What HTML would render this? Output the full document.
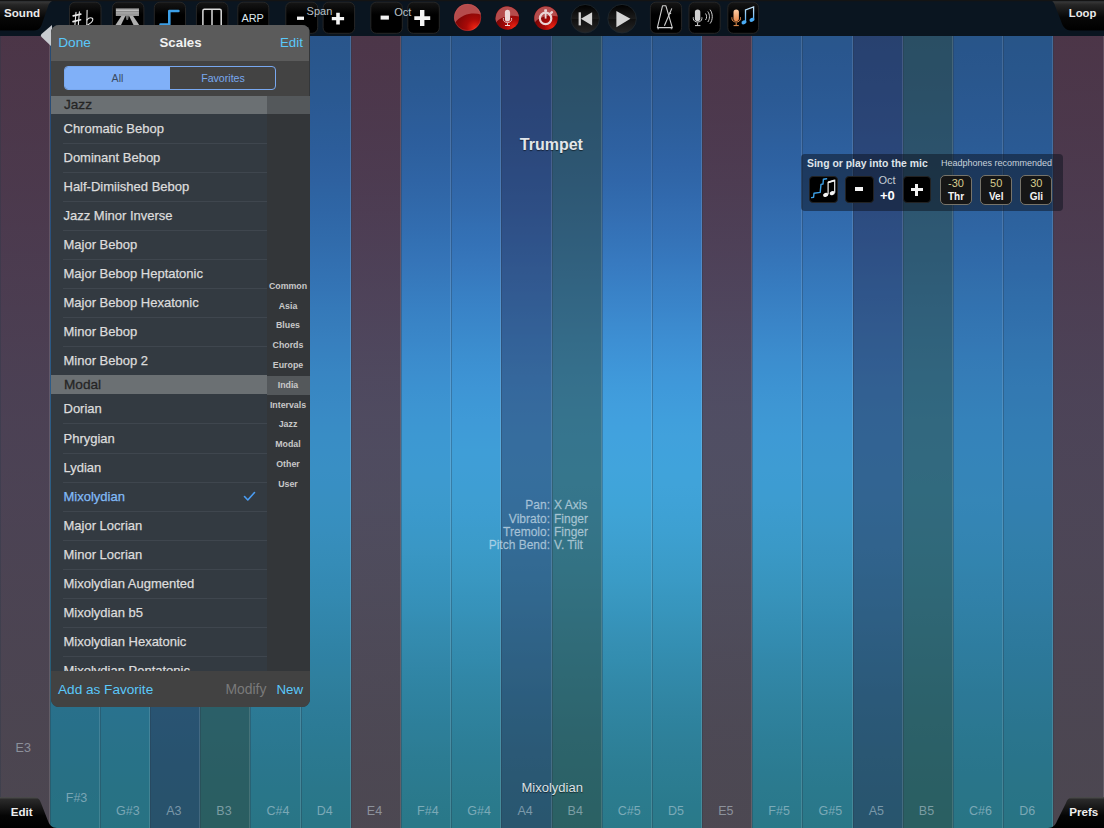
<!DOCTYPE html>
<html><head><meta charset="utf-8">
<style>
*{box-sizing:border-box;margin:0;padding:0}
html,body{width:1104px;height:828px;overflow:hidden;background:#0a141e;font-family:"Liberation Sans",sans-serif}
#stage{position:absolute;left:0;top:0;width:1104px;height:828px;overflow:hidden}
#bg{position:absolute;left:0;top:36px;width:1104px;height:792px;
 background:
  radial-gradient(ellipse 450px 300px at 612px 364px, rgba(72,170,232,1) 0%, rgba(70,168,226,.5) 45%, rgba(68,165,220,0) 100%),
  linear-gradient(to bottom,#25508c 0%,#2a5fa2 15%,#2e6cb2 33%,#3182ba 52%,#2f8aac 72%,#267282 100%);}
.col{position:absolute;top:36px;height:792px}
.col:after{content:"";position:absolute;inset:0;border-left:1px solid rgba(40,55,70,.32);box-shadow:inset -1px 0 0 rgba(255,255,255,.13)}
.A:before{content:'';position:absolute;inset:0;background:rgba(40,38,75,.42)}
.B:before{content:'';position:absolute;inset:0;background:rgba(43,72,62,.5)}
.E:before{content:'';position:absolute;inset:0;background:linear-gradient(rgba(86,45,54,.78),rgba(86,50,58,.74) 45%,rgba(85,60,68,.8))}
.lbl{position:absolute;font-size:12.5px;line-height:1;white-space:nowrap;color:rgba(205,220,228,.5)}
#toolbar{position:absolute;left:0;top:0;width:1104px;height:36px;background:#0b1520}
.btn{position:absolute;top:2px;width:31.5px;height:31.5px;border-radius:6px;background:#000;border:1px solid #1c232a}
.txt{position:absolute;white-space:nowrap;line-height:1}
#panel{position:absolute;left:51px;top:25px;width:258.6px;height:682px;border-radius:8px;overflow:hidden;background:#33373a}
#arrow{position:absolute;left:40px;top:25px;width:14px;height:22px}
#phead{position:absolute;left:0;top:0;width:258px;height:36px;background:#5b5b5b}
#pseg{position:absolute;left:0;top:36px;width:258px;height:35px;background:#434343}
#seg{position:absolute;left:13px;top:5px;width:212px;height:24px;border:1px solid #78a8f0;border-radius:4px;overflow:hidden;background:#434343}
#seg .on{position:absolute;left:0;top:0;width:105px;height:22px;background:#80b0f8;color:#3a4a60;font-size:10.6px;text-align:center;line-height:23px}
#seg .off{position:absolute;left:105px;top:0;width:106px;height:22px;color:#78a8f0;font-size:10.6px;text-align:center;line-height:23px}
#list{position:absolute;left:0;top:0;width:216px;height:646px;background:#333a41}
.sec{position:absolute;left:0;width:258px;height:19px;background:linear-gradient(to right,#6b7073 216px,#54585b 216px);color:#252525;-webkit-text-stroke:.3px #252525;font-size:13.6px;padding-left:13px;line-height:19px}
.row{position:absolute;left:0;width:216px;height:29px}
.row span{position:absolute;left:12.5px;top:7px;font-size:13px;color:#dcdcdc;line-height:15px;-webkit-text-stroke:.25px #dcdcdc;white-space:nowrap}
.row:after{content:"";position:absolute;left:12px;right:0;bottom:-1px;height:1px;background:#3f464e}
.row.sel span{color:#82bbf7;-webkit-text-stroke:.25px #82bbf7}
.chk{position:absolute;left:190px;top:9px;width:12px;height:10px}
#idxs{position:absolute;left:216px;top:0;width:43px;height:646px;background:#333639}
.idx{position:absolute;left:0;width:42px;text-align:center;font-size:8.8px;font-weight:700;color:#c8c8c8;line-height:11px}
#pfoot{position:absolute;left:0;top:646px;width:259px;height:36px;background:#424242}
.tab{position:absolute;background:linear-gradient(#2b2b2b,#050505 55%,#000);}
.box{position:absolute;top:21px;width:32px;height:29.5px;border-radius:5px;background:#161616;border:1px solid #77746a;color:#d8cc90;font-size:11px;text-align:center;line-height:13px;padding-top:.5px}
.box b{display:block;color:#f4f4f4;font-size:10px;line-height:12px;margin-top:1.5px}

</style></head><body><div id="stage">
<div id="bg"></div>
<div class="col E" style="left:0px;width:50px;background-image:linear-gradient(to bottom,rgb(39,84,133) 0.0%,rgb(39,84,134) 2.0%,rgb(39,84,135) 4.0%,rgb(40,85,136) 6.1%,rgb(40,85,137) 8.1%,rgb(40,86,138) 10.1%,rgb(40,86,139) 12.1%,rgb(40,87,141) 14.1%,rgb(41,88,142) 16.2%,rgb(41,88,143) 18.2%,rgb(41,89,144) 20.2%,rgb(42,90,146) 22.2%,rgb(42,91,147) 24.2%,rgb(42,92,149) 26.3%,rgb(42,94,150) 28.3%,rgb(43,95,151) 30.3%,rgb(43,96,152) 32.3%,rgb(43,98,153) 34.3%,rgb(43,99,154) 36.4%,rgb(44,100,155) 38.4%,rgb(44,102,156) 40.4%,rgb(44,103,156) 42.4%,rgb(44,104,157) 44.4%,rgb(44,105,157) 46.5%,rgb(44,106,157) 48.5%,rgb(44,106,157) 50.5%,rgb(44,107,157) 52.5%,rgb(44,108,157) 54.5%,rgb(44,109,156) 56.6%,rgb(44,109,155) 58.6%,rgb(44,109,154) 60.6%,rgb(43,110,153) 62.6%,rgb(43,110,152) 64.6%,rgb(43,110,151) 66.7%,rgb(43,110,149) 68.7%,rgb(42,110,148) 70.7%,rgb(42,110,146) 72.7%,rgb(41,109,145) 74.7%,rgb(41,109,143) 76.8%,rgb(41,109,141) 78.8%,rgb(40,109,140) 80.8%,rgb(40,109,138) 82.8%,rgb(40,110,137) 84.8%,rgb(40,110,136) 86.9%,rgb(40,110,134) 88.9%,rgb(39,110,133) 90.9%,rgb(39,111,132) 92.9%,rgb(39,111,131) 94.9%,rgb(39,112,130) 97.0%,rgb(39,112,129) 99.0%,rgb(39,112,128) 100.0%)"></div>
<div class="col N" style="left:50px;width:50px;background-image:linear-gradient(to bottom,rgb(39,84,134) 0.0%,rgb(40,84,135) 2.0%,rgb(40,85,136) 4.0%,rgb(40,85,137) 6.1%,rgb(40,86,138) 8.1%,rgb(40,86,140) 10.1%,rgb(41,87,141) 12.1%,rgb(41,88,142) 14.1%,rgb(41,89,144) 16.2%,rgb(42,90,145) 18.2%,rgb(42,91,147) 20.2%,rgb(42,92,149) 22.2%,rgb(43,93,150) 24.2%,rgb(43,95,152) 26.3%,rgb(44,96,153) 28.3%,rgb(44,98,155) 30.3%,rgb(44,99,156) 32.3%,rgb(45,101,157) 34.3%,rgb(45,103,159) 36.4%,rgb(45,104,160) 38.4%,rgb(45,106,161) 40.4%,rgb(46,107,162) 42.4%,rgb(46,108,162) 44.4%,rgb(46,109,163) 46.5%,rgb(46,110,163) 48.5%,rgb(46,111,163) 50.5%,rgb(46,112,163) 52.5%,rgb(46,113,162) 54.5%,rgb(46,113,161) 56.6%,rgb(46,114,161) 58.6%,rgb(45,114,159) 60.6%,rgb(45,114,158) 62.6%,rgb(45,114,157) 64.6%,rgb(44,114,155) 66.7%,rgb(44,114,154) 68.7%,rgb(43,114,152) 70.7%,rgb(43,113,150) 72.7%,rgb(43,113,148) 74.7%,rgb(42,112,146) 76.8%,rgb(42,112,144) 78.8%,rgb(41,112,143) 80.8%,rgb(41,112,141) 82.8%,rgb(41,112,139) 84.8%,rgb(40,112,138) 86.9%,rgb(40,112,136) 88.9%,rgb(40,112,135) 90.9%,rgb(40,112,133) 92.9%,rgb(40,112,132) 94.9%,rgb(39,113,131) 97.0%,rgb(39,113,130) 99.0%,rgb(39,113,129) 100.0%)"></div>
<div class="col N" style="left:100px;width:50px;background-image:linear-gradient(to bottom,rgb(40,84,135) 0.0%,rgb(40,85,136) 2.0%,rgb(40,85,137) 4.0%,rgb(40,86,138) 6.1%,rgb(41,86,140) 8.1%,rgb(41,87,141) 10.1%,rgb(41,88,143) 12.1%,rgb(42,89,145) 14.1%,rgb(42,90,146) 16.2%,rgb(42,91,148) 18.2%,rgb(43,92,150) 20.2%,rgb(43,94,152) 22.2%,rgb(44,95,154) 24.2%,rgb(44,97,156) 26.3%,rgb(45,99,158) 28.3%,rgb(45,101,159) 30.3%,rgb(46,103,161) 32.3%,rgb(46,105,162) 34.3%,rgb(47,106,164) 36.4%,rgb(47,108,165) 38.4%,rgb(47,110,166) 40.4%,rgb(47,112,167) 42.4%,rgb(48,113,168) 44.4%,rgb(48,114,169) 46.5%,rgb(48,115,169) 48.5%,rgb(48,116,169) 50.5%,rgb(48,117,169) 52.5%,rgb(48,118,168) 54.5%,rgb(48,119,167) 56.6%,rgb(47,119,166) 58.6%,rgb(47,119,165) 60.6%,rgb(47,119,164) 62.6%,rgb(46,119,162) 64.6%,rgb(46,119,160) 66.7%,rgb(45,118,158) 68.7%,rgb(45,118,156) 70.7%,rgb(44,117,154) 72.7%,rgb(44,117,152) 74.7%,rgb(43,116,150) 76.8%,rgb(43,115,148) 78.8%,rgb(42,115,146) 80.8%,rgb(42,114,144) 82.8%,rgb(41,114,142) 84.8%,rgb(41,114,140) 86.9%,rgb(41,114,138) 88.9%,rgb(40,114,136) 90.9%,rgb(40,114,135) 92.9%,rgb(40,114,133) 94.9%,rgb(40,114,132) 97.0%,rgb(40,114,131) 99.0%,rgb(39,114,130) 100.0%)"></div>
<div class="col A" style="left:150px;width:50px;background-image:linear-gradient(to bottom,rgb(40,85,136) 0.0%,rgb(40,85,137) 2.0%,rgb(40,86,138) 4.0%,rgb(41,86,140) 6.1%,rgb(41,87,141) 8.1%,rgb(41,88,143) 10.1%,rgb(42,89,145) 12.1%,rgb(42,90,147) 14.1%,rgb(43,91,149) 16.2%,rgb(43,93,151) 18.2%,rgb(44,94,153) 20.2%,rgb(44,96,155) 22.2%,rgb(45,98,157) 24.2%,rgb(45,100,160) 26.3%,rgb(46,102,162) 28.3%,rgb(47,104,164) 30.3%,rgb(47,106,166) 32.3%,rgb(48,108,168) 34.3%,rgb(48,111,169) 36.4%,rgb(49,113,171) 38.4%,rgb(49,115,172) 40.4%,rgb(49,117,174) 42.4%,rgb(50,118,175) 44.4%,rgb(50,120,175) 46.5%,rgb(50,121,176) 48.5%,rgb(50,122,176) 50.5%,rgb(50,123,176) 52.5%,rgb(50,124,175) 54.5%,rgb(50,124,174) 56.6%,rgb(49,125,173) 58.6%,rgb(49,125,171) 60.6%,rgb(49,125,170) 62.6%,rgb(48,124,168) 64.6%,rgb(48,124,166) 66.7%,rgb(47,123,164) 68.7%,rgb(46,122,161) 70.7%,rgb(46,121,159) 72.7%,rgb(45,120,156) 74.7%,rgb(45,119,154) 76.8%,rgb(44,119,151) 78.8%,rgb(43,118,149) 80.8%,rgb(43,117,147) 82.8%,rgb(42,117,144) 84.8%,rgb(42,116,142) 86.9%,rgb(41,116,140) 88.9%,rgb(41,115,138) 90.9%,rgb(41,115,136) 92.9%,rgb(40,115,135) 94.9%,rgb(40,115,133) 97.0%,rgb(40,115,132) 99.0%,rgb(40,115,131) 100.0%)"></div>
<div class="col B" style="left:200px;width:50px;background-image:linear-gradient(to bottom,rgb(40,85,137) 0.0%,rgb(40,85,138) 2.0%,rgb(41,86,140) 4.0%,rgb(41,87,141) 6.1%,rgb(41,88,143) 8.1%,rgb(42,89,145) 10.1%,rgb(42,90,147) 12.1%,rgb(43,91,149) 14.1%,rgb(43,93,151) 16.2%,rgb(44,94,154) 18.2%,rgb(45,96,156) 20.2%,rgb(45,98,159) 22.2%,rgb(46,100,161) 24.2%,rgb(47,102,164) 26.3%,rgb(47,105,166) 28.3%,rgb(48,107,169) 30.3%,rgb(49,110,171) 32.3%,rgb(49,112,173) 34.3%,rgb(50,115,175) 36.4%,rgb(51,117,177) 38.4%,rgb(51,120,179) 40.4%,rgb(52,122,180) 42.4%,rgb(52,124,181) 44.4%,rgb(52,126,182) 46.5%,rgb(52,127,183) 48.5%,rgb(52,128,183) 50.5%,rgb(52,129,183) 52.5%,rgb(52,130,182) 54.5%,rgb(52,131,181) 56.6%,rgb(52,131,180) 58.6%,rgb(51,131,178) 60.6%,rgb(51,130,176) 62.6%,rgb(50,130,174) 64.6%,rgb(50,129,172) 66.7%,rgb(49,128,169) 68.7%,rgb(48,127,166) 70.7%,rgb(47,126,164) 72.7%,rgb(47,125,161) 74.7%,rgb(46,123,158) 76.8%,rgb(45,122,155) 78.8%,rgb(44,121,152) 80.8%,rgb(44,120,150) 82.8%,rgb(43,119,147) 84.8%,rgb(43,118,145) 86.9%,rgb(42,118,142) 88.9%,rgb(42,117,140) 90.9%,rgb(41,117,138) 92.9%,rgb(41,116,136) 94.9%,rgb(41,116,134) 97.0%,rgb(40,116,133) 99.0%,rgb(40,116,132) 100.0%)"></div>
<div class="col N" style="left:250px;width:51px;background-image:linear-gradient(to bottom,rgb(40,85,138) 0.0%,rgb(41,86,139) 2.0%,rgb(41,86,141) 4.0%,rgb(41,87,143) 6.1%,rgb(42,88,145) 8.1%,rgb(42,89,147) 10.1%,rgb(43,91,149) 12.1%,rgb(43,92,151) 14.1%,rgb(44,94,154) 16.2%,rgb(45,96,157) 18.2%,rgb(46,98,160) 20.2%,rgb(46,100,162) 22.2%,rgb(47,103,165) 24.2%,rgb(48,105,168) 26.3%,rgb(49,108,171) 28.3%,rgb(50,111,174) 30.3%,rgb(50,114,176) 32.3%,rgb(51,117,179) 34.3%,rgb(52,119,181) 36.4%,rgb(53,122,183) 38.4%,rgb(53,125,185) 40.4%,rgb(54,127,187) 42.4%,rgb(54,129,188) 44.4%,rgb(54,131,189) 46.5%,rgb(55,133,190) 48.5%,rgb(55,134,190) 50.5%,rgb(55,135,190) 52.5%,rgb(54,136,189) 54.5%,rgb(54,137,188) 56.6%,rgb(54,137,186) 58.6%,rgb(53,137,185) 60.6%,rgb(53,136,182) 62.6%,rgb(52,136,180) 64.6%,rgb(51,135,177) 66.7%,rgb(51,133,175) 68.7%,rgb(50,132,172) 70.7%,rgb(49,130,168) 72.7%,rgb(48,129,165) 74.7%,rgb(47,127,162) 76.8%,rgb(46,126,159) 78.8%,rgb(46,124,156) 80.8%,rgb(45,123,153) 82.8%,rgb(44,122,150) 84.8%,rgb(43,121,147) 86.9%,rgb(43,120,145) 88.9%,rgb(42,119,142) 90.9%,rgb(42,118,140) 92.9%,rgb(41,118,138) 94.9%,rgb(41,118,136) 97.0%,rgb(41,117,134) 99.0%,rgb(40,117,133) 100.0%)"></div>
<div class="col N" style="left:301px;width:50px;background-image:linear-gradient(to bottom,rgb(41,85,139) 0.0%,rgb(41,86,140) 2.0%,rgb(41,87,142) 4.0%,rgb(42,88,144) 6.1%,rgb(42,89,146) 8.1%,rgb(43,90,149) 10.1%,rgb(43,92,151) 12.1%,rgb(44,93,154) 14.1%,rgb(45,95,157) 16.2%,rgb(46,97,160) 18.2%,rgb(46,100,163) 20.2%,rgb(47,102,166) 22.2%,rgb(48,105,169) 24.2%,rgb(49,108,172) 26.3%,rgb(50,111,176) 28.3%,rgb(51,114,179) 30.3%,rgb(52,117,182) 32.3%,rgb(53,121,185) 34.3%,rgb(54,124,187) 36.4%,rgb(55,127,190) 38.4%,rgb(55,130,192) 40.4%,rgb(56,133,194) 42.4%,rgb(56,135,195) 44.4%,rgb(57,137,196) 46.5%,rgb(57,139,197) 48.5%,rgb(57,141,197) 50.5%,rgb(57,142,197) 52.5%,rgb(57,143,196) 54.5%,rgb(56,143,195) 56.6%,rgb(56,143,193) 58.6%,rgb(55,143,191) 60.6%,rgb(55,142,189) 62.6%,rgb(54,141,186) 64.6%,rgb(53,140,183) 66.7%,rgb(52,138,180) 68.7%,rgb(51,137,177) 70.7%,rgb(50,135,173) 72.7%,rgb(49,133,170) 74.7%,rgb(48,131,166) 76.8%,rgb(47,129,163) 78.8%,rgb(47,128,159) 80.8%,rgb(46,126,156) 82.8%,rgb(45,124,153) 84.8%,rgb(44,123,150) 86.9%,rgb(43,122,147) 88.9%,rgb(43,121,144) 90.9%,rgb(42,120,142) 92.9%,rgb(42,119,139) 94.9%,rgb(41,119,137) 97.0%,rgb(41,118,135) 99.0%,rgb(41,118,134) 100.0%)"></div>
<div class="col E" style="left:351px;width:50px;background-image:linear-gradient(to bottom,rgb(41,86,139) 0.0%,rgb(41,86,141) 2.0%,rgb(42,87,143) 4.0%,rgb(42,88,145) 6.1%,rgb(43,89,148) 8.1%,rgb(43,91,150) 10.1%,rgb(44,93,153) 12.1%,rgb(45,94,156) 14.1%,rgb(46,97,159) 16.2%,rgb(46,99,162) 18.2%,rgb(47,101,166) 20.2%,rgb(48,104,169) 22.2%,rgb(49,107,173) 24.2%,rgb(50,110,176) 26.3%,rgb(51,114,180) 28.3%,rgb(52,117,183) 30.3%,rgb(54,121,187) 32.3%,rgb(55,124,190) 34.3%,rgb(55,128,193) 36.4%,rgb(56,131,196) 38.4%,rgb(57,135,198) 40.4%,rgb(58,138,200) 42.4%,rgb(58,140,202) 44.4%,rgb(59,143,203) 46.5%,rgb(59,145,204) 48.5%,rgb(59,146,204) 50.5%,rgb(59,148,204) 52.5%,rgb(59,148,203) 54.5%,rgb(59,149,201) 56.6%,rgb(58,149,200) 58.6%,rgb(57,148,197) 60.6%,rgb(57,147,195) 62.6%,rgb(56,146,192) 64.6%,rgb(55,145,189) 66.7%,rgb(54,143,185) 68.7%,rgb(53,141,181) 70.7%,rgb(52,139,178) 72.7%,rgb(51,137,174) 74.7%,rgb(50,135,170) 76.8%,rgb(49,132,166) 78.8%,rgb(48,131,162) 80.8%,rgb(47,129,159) 82.8%,rgb(46,127,155) 84.8%,rgb(45,125,152) 86.9%,rgb(44,124,149) 88.9%,rgb(43,123,146) 90.9%,rgb(43,121,143) 92.9%,rgb(42,121,141) 94.9%,rgb(42,120,138) 97.0%,rgb(41,119,136) 99.0%,rgb(41,119,135) 100.0%)"></div>
<div class="col N" style="left:401px;width:50px;background-image:linear-gradient(to bottom,rgb(41,86,140) 0.0%,rgb(41,87,142) 2.0%,rgb(42,88,144) 4.0%,rgb(42,89,146) 6.1%,rgb(43,90,149) 8.1%,rgb(44,92,152) 10.1%,rgb(44,93,155) 12.1%,rgb(45,95,158) 14.1%,rgb(46,98,161) 16.2%,rgb(47,100,165) 18.2%,rgb(48,103,168) 20.2%,rgb(49,106,172) 22.2%,rgb(50,109,176) 24.2%,rgb(51,113,180) 26.3%,rgb(53,116,184) 28.3%,rgb(54,120,187) 30.3%,rgb(55,124,191) 32.3%,rgb(56,128,195) 34.3%,rgb(57,132,198) 36.4%,rgb(58,135,201) 38.4%,rgb(59,139,204) 40.4%,rgb(60,142,206) 42.4%,rgb(60,145,208) 44.4%,rgb(61,148,209) 46.5%,rgb(61,150,210) 48.5%,rgb(61,152,210) 50.5%,rgb(61,153,210) 52.5%,rgb(61,154,209) 54.5%,rgb(61,154,207) 56.6%,rgb(60,154,205) 58.6%,rgb(59,153,203) 60.6%,rgb(58,152,200) 62.6%,rgb(58,151,197) 64.6%,rgb(56,149,193) 66.7%,rgb(55,147,190) 68.7%,rgb(54,145,186) 70.7%,rgb(53,143,182) 72.7%,rgb(52,140,177) 74.7%,rgb(51,138,173) 76.8%,rgb(50,135,169) 78.8%,rgb(48,133,165) 80.8%,rgb(47,131,161) 82.8%,rgb(46,129,158) 84.8%,rgb(45,127,154) 86.9%,rgb(45,126,151) 88.9%,rgb(44,124,147) 90.9%,rgb(43,123,145) 92.9%,rgb(43,122,142) 94.9%,rgb(42,121,139) 97.0%,rgb(41,120,137) 99.0%,rgb(41,120,136) 100.0%)"></div>
<div class="col N" style="left:451px;width:50px;background-image:linear-gradient(to bottom,rgb(41,86,141) 0.0%,rgb(42,87,143) 2.0%,rgb(42,88,145) 4.0%,rgb(43,89,147) 6.1%,rgb(43,90,150) 8.1%,rgb(44,92,153) 10.1%,rgb(45,94,156) 12.1%,rgb(46,96,159) 14.1%,rgb(47,99,163) 16.2%,rgb(48,101,167) 18.2%,rgb(49,104,170) 20.2%,rgb(50,107,174) 22.2%,rgb(51,111,179) 24.2%,rgb(52,114,183) 26.3%,rgb(54,118,187) 28.3%,rgb(55,122,191) 30.3%,rgb(56,127,195) 32.3%,rgb(57,131,199) 34.3%,rgb(58,135,202) 36.4%,rgb(59,139,205) 38.4%,rgb(60,143,208) 40.4%,rgb(61,146,211) 42.4%,rgb(62,149,213) 44.4%,rgb(62,152,214) 46.5%,rgb(63,154,215) 48.5%,rgb(63,156,215) 50.5%,rgb(63,158,215) 52.5%,rgb(63,158,214) 54.5%,rgb(62,158,212) 56.6%,rgb(62,158,210) 58.6%,rgb(61,157,208) 60.6%,rgb(60,156,204) 62.6%,rgb(59,155,201) 64.6%,rgb(58,153,197) 66.7%,rgb(57,151,193) 68.7%,rgb(55,148,189) 70.7%,rgb(54,146,185) 72.7%,rgb(53,143,180) 74.7%,rgb(52,140,176) 76.8%,rgb(50,138,172) 78.8%,rgb(49,135,167) 80.8%,rgb(48,133,163) 82.8%,rgb(47,131,159) 84.8%,rgb(46,129,156) 86.9%,rgb(45,127,152) 88.9%,rgb(44,125,149) 90.9%,rgb(44,124,146) 92.9%,rgb(43,123,143) 94.9%,rgb(42,122,140) 97.0%,rgb(42,121,138) 99.0%,rgb(41,121,137) 100.0%)"></div>
<div class="col A" style="left:501px;width:51px;background-image:linear-gradient(to bottom,rgb(41,86,141) 0.0%,rgb(42,87,143) 2.0%,rgb(42,88,145) 4.0%,rgb(43,89,148) 6.1%,rgb(43,91,151) 8.1%,rgb(44,92,154) 10.1%,rgb(45,94,157) 12.1%,rgb(46,97,160) 14.1%,rgb(47,99,164) 16.2%,rgb(48,102,168) 18.2%,rgb(49,105,172) 20.2%,rgb(50,108,176) 22.2%,rgb(52,112,181) 24.2%,rgb(53,116,185) 26.3%,rgb(54,120,189) 28.3%,rgb(56,124,193) 30.3%,rgb(57,128,197) 32.3%,rgb(58,133,201) 34.3%,rgb(59,137,205) 36.4%,rgb(60,141,209) 38.4%,rgb(61,145,212) 40.4%,rgb(62,149,214) 42.4%,rgb(63,152,217) 44.4%,rgb(64,155,218) 46.5%,rgb(64,158,219) 48.5%,rgb(64,160,219) 50.5%,rgb(64,161,219) 52.5%,rgb(64,162,218) 54.5%,rgb(63,162,216) 56.6%,rgb(63,161,214) 58.6%,rgb(62,160,211) 60.6%,rgb(61,159,208) 62.6%,rgb(60,157,204) 64.6%,rgb(59,155,200) 66.7%,rgb(57,153,196) 68.7%,rgb(56,151,192) 70.7%,rgb(55,148,187) 72.7%,rgb(54,145,183) 74.7%,rgb(52,142,178) 76.8%,rgb(51,139,174) 78.8%,rgb(50,137,169) 80.8%,rgb(48,134,165) 82.8%,rgb(47,132,161) 84.8%,rgb(46,130,157) 86.9%,rgb(45,128,153) 88.9%,rgb(45,126,150) 90.9%,rgb(44,125,146) 92.9%,rgb(43,123,143) 94.9%,rgb(42,122,141) 97.0%,rgb(42,121,138) 99.0%,rgb(42,121,137) 100.0%)"></div>
<div class="col B" style="left:552px;width:50px;background-image:linear-gradient(to bottom,rgb(41,86,141) 0.0%,rgb(42,87,143) 2.0%,rgb(42,88,146) 4.0%,rgb(43,89,148) 6.1%,rgb(44,91,151) 8.1%,rgb(44,93,154) 10.1%,rgb(45,95,158) 12.1%,rgb(46,97,161) 14.1%,rgb(47,100,165) 16.2%,rgb(48,102,169) 18.2%,rgb(49,106,173) 20.2%,rgb(51,109,177) 22.2%,rgb(52,113,182) 24.2%,rgb(53,117,186) 26.3%,rgb(55,121,190) 28.3%,rgb(56,125,195) 30.3%,rgb(57,130,199) 32.3%,rgb(59,134,203) 34.3%,rgb(60,138,207) 36.4%,rgb(61,143,211) 38.4%,rgb(62,147,214) 40.4%,rgb(63,151,217) 42.4%,rgb(64,154,219) 44.4%,rgb(64,157,220) 46.5%,rgb(65,160,221) 48.5%,rgb(65,162,222) 50.5%,rgb(65,163,221) 52.5%,rgb(64,164,220) 54.5%,rgb(64,164,218) 56.6%,rgb(63,163,216) 58.6%,rgb(62,162,213) 60.6%,rgb(62,161,210) 62.6%,rgb(60,159,206) 64.6%,rgb(59,157,202) 66.7%,rgb(58,155,198) 68.7%,rgb(57,152,193) 70.7%,rgb(55,149,189) 72.7%,rgb(54,146,184) 74.7%,rgb(53,143,179) 76.8%,rgb(51,140,175) 78.8%,rgb(50,138,170) 80.8%,rgb(49,135,166) 82.8%,rgb(48,133,162) 84.8%,rgb(47,130,158) 86.9%,rgb(46,128,154) 88.9%,rgb(45,127,150) 90.9%,rgb(44,125,147) 92.9%,rgb(43,124,144) 94.9%,rgb(43,123,141) 97.0%,rgb(42,122,138) 99.0%,rgb(42,121,137) 100.0%)"></div>
<div class="col N" style="left:602px;width:50px;background-image:linear-gradient(to bottom,rgb(41,86,141) 0.0%,rgb(42,87,144) 2.0%,rgb(42,88,146) 4.0%,rgb(43,89,148) 6.1%,rgb(44,91,151) 8.1%,rgb(44,93,154) 10.1%,rgb(45,95,158) 12.1%,rgb(46,97,161) 14.1%,rgb(47,100,165) 16.2%,rgb(48,102,169) 18.2%,rgb(49,106,173) 20.2%,rgb(51,109,177) 22.2%,rgb(52,113,182) 24.2%,rgb(53,117,186) 26.3%,rgb(55,121,191) 28.3%,rgb(56,125,195) 30.3%,rgb(57,130,199) 32.3%,rgb(59,134,203) 34.3%,rgb(60,139,207) 36.4%,rgb(61,143,211) 38.4%,rgb(62,147,214) 40.4%,rgb(63,151,217) 42.4%,rgb(64,155,219) 44.4%,rgb(65,158,221) 46.5%,rgb(65,160,222) 48.5%,rgb(65,162,222) 50.5%,rgb(65,163,221) 52.5%,rgb(65,164,220) 54.5%,rgb(64,164,218) 56.6%,rgb(63,164,216) 58.6%,rgb(63,163,213) 60.6%,rgb(62,161,210) 62.6%,rgb(61,159,206) 64.6%,rgb(59,157,202) 66.7%,rgb(58,155,198) 68.7%,rgb(57,152,193) 70.7%,rgb(55,149,189) 72.7%,rgb(54,146,184) 74.7%,rgb(53,143,179) 76.8%,rgb(51,141,175) 78.8%,rgb(50,138,170) 80.8%,rgb(49,135,166) 82.8%,rgb(48,133,162) 84.8%,rgb(47,131,158) 86.9%,rgb(46,129,154) 88.9%,rgb(45,127,150) 90.9%,rgb(44,125,147) 92.9%,rgb(43,124,144) 94.9%,rgb(43,123,141) 97.0%,rgb(42,122,139) 99.0%,rgb(42,121,137) 100.0%)"></div>
<div class="col N" style="left:652px;width:50px;background-image:linear-gradient(to bottom,rgb(41,86,141) 0.0%,rgb(42,87,143) 2.0%,rgb(42,88,146) 4.0%,rgb(43,89,148) 6.1%,rgb(44,91,151) 8.1%,rgb(44,93,154) 10.1%,rgb(45,95,157) 12.1%,rgb(46,97,161) 14.1%,rgb(47,99,165) 16.2%,rgb(48,102,168) 18.2%,rgb(49,105,173) 20.2%,rgb(51,109,177) 22.2%,rgb(52,112,181) 24.2%,rgb(53,116,185) 26.3%,rgb(54,120,190) 28.3%,rgb(56,125,194) 30.3%,rgb(57,129,198) 32.3%,rgb(58,133,202) 34.3%,rgb(60,138,206) 36.4%,rgb(61,142,210) 38.4%,rgb(62,146,213) 40.4%,rgb(63,150,216) 42.4%,rgb(63,153,218) 44.4%,rgb(64,156,219) 46.5%,rgb(64,159,220) 48.5%,rgb(65,161,220) 50.5%,rgb(64,162,220) 52.5%,rgb(64,163,219) 54.5%,rgb(64,163,217) 56.6%,rgb(63,162,215) 58.6%,rgb(62,161,212) 60.6%,rgb(61,160,209) 62.6%,rgb(60,158,205) 64.6%,rgb(59,156,201) 66.7%,rgb(58,154,197) 68.7%,rgb(56,151,192) 70.7%,rgb(55,149,188) 72.7%,rgb(54,146,183) 74.7%,rgb(52,143,179) 76.8%,rgb(51,140,174) 78.8%,rgb(50,137,170) 80.8%,rgb(49,135,165) 82.8%,rgb(48,132,161) 84.8%,rgb(46,130,157) 86.9%,rgb(46,128,153) 88.9%,rgb(45,126,150) 90.9%,rgb(44,125,147) 92.9%,rgb(43,124,144) 94.9%,rgb(42,122,141) 97.0%,rgb(42,122,138) 99.0%,rgb(42,121,137) 100.0%)"></div>
<div class="col E" style="left:702px;width:50px;background-image:linear-gradient(to bottom,rgb(41,86,141) 0.0%,rgb(42,87,143) 2.0%,rgb(42,88,145) 4.0%,rgb(43,89,148) 6.1%,rgb(43,91,150) 8.1%,rgb(44,92,153) 10.1%,rgb(45,94,157) 12.1%,rgb(46,96,160) 14.1%,rgb(47,99,164) 16.2%,rgb(48,102,167) 18.2%,rgb(49,105,171) 20.2%,rgb(50,108,175) 22.2%,rgb(51,111,180) 24.2%,rgb(53,115,184) 26.3%,rgb(54,119,188) 28.3%,rgb(55,123,192) 30.3%,rgb(56,127,196) 32.3%,rgb(58,132,200) 34.3%,rgb(59,136,204) 36.4%,rgb(60,140,207) 38.4%,rgb(61,144,210) 40.4%,rgb(62,148,213) 42.4%,rgb(62,151,215) 44.4%,rgb(63,154,216) 46.5%,rgb(63,156,217) 48.5%,rgb(63,158,217) 50.5%,rgb(63,159,217) 52.5%,rgb(63,160,216) 54.5%,rgb(63,160,214) 56.6%,rgb(62,160,212) 58.6%,rgb(61,159,209) 60.6%,rgb(60,158,206) 62.6%,rgb(59,156,203) 64.6%,rgb(58,154,199) 66.7%,rgb(57,152,195) 68.7%,rgb(56,149,190) 70.7%,rgb(54,147,186) 72.7%,rgb(53,144,182) 74.7%,rgb(52,141,177) 76.8%,rgb(51,139,173) 78.8%,rgb(49,136,168) 80.8%,rgb(48,134,164) 82.8%,rgb(47,131,160) 84.8%,rgb(46,129,156) 86.9%,rgb(45,127,153) 88.9%,rgb(44,126,149) 90.9%,rgb(44,124,146) 92.9%,rgb(43,123,143) 94.9%,rgb(42,122,140) 97.0%,rgb(42,121,138) 99.0%,rgb(42,121,137) 100.0%)"></div>
<div class="col N" style="left:752px;width:50px;background-image:linear-gradient(to bottom,rgb(41,86,140) 0.0%,rgb(41,87,142) 2.0%,rgb(42,88,145) 4.0%,rgb(42,89,147) 6.1%,rgb(43,90,149) 8.1%,rgb(44,92,152) 10.1%,rgb(45,94,155) 12.1%,rgb(45,96,159) 14.1%,rgb(46,98,162) 16.2%,rgb(47,101,166) 18.2%,rgb(48,103,169) 20.2%,rgb(50,107,173) 22.2%,rgb(51,110,177) 24.2%,rgb(52,113,181) 26.3%,rgb(53,117,185) 28.3%,rgb(54,121,189) 30.3%,rgb(55,125,193) 32.3%,rgb(57,129,196) 34.3%,rgb(58,133,200) 36.4%,rgb(59,137,203) 38.4%,rgb(60,141,206) 40.4%,rgb(60,144,208) 42.4%,rgb(61,147,210) 44.4%,rgb(62,150,211) 46.5%,rgb(62,152,212) 48.5%,rgb(62,154,213) 50.5%,rgb(62,155,212) 52.5%,rgb(62,156,211) 54.5%,rgb(61,156,210) 56.6%,rgb(61,156,208) 58.6%,rgb(60,155,205) 60.6%,rgb(59,154,202) 62.6%,rgb(58,153,199) 64.6%,rgb(57,151,195) 66.7%,rgb(56,149,191) 68.7%,rgb(55,147,187) 70.7%,rgb(54,144,183) 72.7%,rgb(52,142,179) 74.7%,rgb(51,139,175) 76.8%,rgb(50,136,170) 78.8%,rgb(49,134,166) 80.8%,rgb(48,132,162) 82.8%,rgb(47,130,158) 84.8%,rgb(46,128,155) 86.9%,rgb(45,126,151) 88.9%,rgb(44,125,148) 90.9%,rgb(43,123,145) 92.9%,rgb(43,122,142) 94.9%,rgb(42,121,140) 97.0%,rgb(42,120,137) 99.0%,rgb(41,120,136) 100.0%)"></div>
<div class="col N" style="left:802px;width:51px;background-image:linear-gradient(to bottom,rgb(41,86,140) 0.0%,rgb(41,86,142) 2.0%,rgb(42,87,144) 4.0%,rgb(42,88,146) 6.1%,rgb(43,90,148) 8.1%,rgb(43,91,151) 10.1%,rgb(44,93,154) 12.1%,rgb(45,95,157) 14.1%,rgb(46,97,160) 16.2%,rgb(47,99,163) 18.2%,rgb(48,102,167) 20.2%,rgb(49,105,171) 22.2%,rgb(50,108,174) 24.2%,rgb(51,111,178) 26.3%,rgb(52,115,182) 28.3%,rgb(53,119,185) 30.3%,rgb(54,122,189) 32.3%,rgb(55,126,192) 34.3%,rgb(56,130,195) 36.4%,rgb(57,133,198) 38.4%,rgb(58,137,201) 40.4%,rgb(59,140,203) 42.4%,rgb(59,143,205) 44.4%,rgb(60,145,206) 46.5%,rgb(60,147,207) 48.5%,rgb(60,149,207) 50.5%,rgb(60,150,206) 52.5%,rgb(60,151,206) 54.5%,rgb(59,151,204) 56.6%,rgb(59,151,202) 58.6%,rgb(58,151,200) 60.6%,rgb(58,150,197) 62.6%,rgb(57,148,194) 64.6%,rgb(56,147,191) 66.7%,rgb(55,145,187) 68.7%,rgb(54,143,183) 70.7%,rgb(52,141,180) 72.7%,rgb(51,138,176) 74.7%,rgb(50,136,172) 76.8%,rgb(49,134,168) 78.8%,rgb(48,132,164) 80.8%,rgb(47,130,160) 82.8%,rgb(46,128,156) 84.8%,rgb(45,126,153) 86.9%,rgb(44,125,150) 88.9%,rgb(44,123,147) 90.9%,rgb(43,122,144) 92.9%,rgb(42,121,141) 94.9%,rgb(42,120,139) 97.0%,rgb(41,120,136) 99.0%,rgb(41,119,135) 100.0%)"></div>
<div class="col A" style="left:853px;width:50px;background-image:linear-gradient(to bottom,rgb(41,85,139) 0.0%,rgb(41,86,141) 2.0%,rgb(41,87,143) 4.0%,rgb(42,88,145) 6.1%,rgb(42,89,147) 8.1%,rgb(43,91,149) 10.1%,rgb(44,92,152) 12.1%,rgb(44,94,155) 14.1%,rgb(45,96,158) 16.2%,rgb(46,98,161) 18.2%,rgb(47,100,164) 20.2%,rgb(48,103,167) 22.2%,rgb(49,106,171) 24.2%,rgb(50,109,174) 26.3%,rgb(51,112,178) 28.3%,rgb(52,116,181) 30.3%,rgb(53,119,184) 32.3%,rgb(54,122,187) 34.3%,rgb(55,126,190) 36.4%,rgb(55,129,192) 38.4%,rgb(56,132,195) 40.4%,rgb(57,135,197) 42.4%,rgb(57,138,198) 44.4%,rgb(58,140,199) 46.5%,rgb(58,142,200) 48.5%,rgb(58,143,200) 50.5%,rgb(58,144,200) 52.5%,rgb(58,145,199) 54.5%,rgb(57,146,198) 56.6%,rgb(57,146,196) 58.6%,rgb(56,145,194) 60.6%,rgb(56,144,191) 62.6%,rgb(55,143,189) 64.6%,rgb(54,142,186) 66.7%,rgb(53,140,182) 68.7%,rgb(52,139,179) 70.7%,rgb(51,137,175) 72.7%,rgb(50,135,172) 74.7%,rgb(49,133,168) 76.8%,rgb(48,131,164) 78.8%,rgb(47,129,161) 80.8%,rgb(46,127,157) 82.8%,rgb(45,126,154) 84.8%,rgb(44,124,151) 86.9%,rgb(44,123,148) 88.9%,rgb(43,122,145) 90.9%,rgb(42,121,142) 92.9%,rgb(42,120,140) 94.9%,rgb(41,119,138) 97.0%,rgb(41,119,135) 99.0%,rgb(41,119,135) 100.0%)"></div>
<div class="col B" style="left:903px;width:50px;background-image:linear-gradient(to bottom,rgb(40,85,138) 0.0%,rgb(41,86,140) 2.0%,rgb(41,87,141) 4.0%,rgb(42,87,143) 6.1%,rgb(42,89,145) 8.1%,rgb(43,90,148) 10.1%,rgb(43,91,150) 12.1%,rgb(44,93,153) 14.1%,rgb(44,95,155) 16.2%,rgb(45,97,158) 18.2%,rgb(46,99,161) 20.2%,rgb(47,101,164) 22.2%,rgb(48,104,167) 24.2%,rgb(49,106,170) 26.3%,rgb(49,109,173) 28.3%,rgb(50,112,176) 30.3%,rgb(51,115,179) 32.3%,rgb(52,118,182) 34.3%,rgb(53,121,184) 36.4%,rgb(53,124,186) 38.4%,rgb(54,127,188) 40.4%,rgb(55,130,190) 42.4%,rgb(55,132,191) 44.4%,rgb(55,134,192) 46.5%,rgb(56,136,193) 48.5%,rgb(56,137,193) 50.5%,rgb(56,138,193) 52.5%,rgb(56,139,192) 54.5%,rgb(55,140,191) 56.6%,rgb(55,140,189) 58.6%,rgb(54,139,188) 60.6%,rgb(54,139,185) 62.6%,rgb(53,138,183) 64.6%,rgb(52,137,180) 66.7%,rgb(51,136,177) 68.7%,rgb(50,134,174) 70.7%,rgb(50,132,171) 72.7%,rgb(49,131,167) 74.7%,rgb(48,129,164) 76.8%,rgb(47,127,161) 78.8%,rgb(46,126,157) 80.8%,rgb(45,124,154) 82.8%,rgb(44,123,151) 84.8%,rgb(44,122,148) 86.9%,rgb(43,121,146) 88.9%,rgb(43,120,143) 90.9%,rgb(42,119,141) 92.9%,rgb(41,119,138) 94.9%,rgb(41,118,136) 97.0%,rgb(41,118,134) 99.0%,rgb(41,118,134) 100.0%)"></div>
<div class="col N" style="left:953px;width:50px;background-image:linear-gradient(to bottom,rgb(40,85,137) 0.0%,rgb(40,85,139) 2.0%,rgb(41,86,140) 4.0%,rgb(41,87,142) 6.1%,rgb(42,88,144) 8.1%,rgb(42,89,146) 10.1%,rgb(43,90,148) 12.1%,rgb(43,92,150) 14.1%,rgb(44,93,153) 16.2%,rgb(44,95,155) 18.2%,rgb(45,97,158) 20.2%,rgb(46,99,160) 22.2%,rgb(47,101,163) 24.2%,rgb(47,104,166) 26.3%,rgb(48,106,169) 28.3%,rgb(49,109,171) 30.3%,rgb(50,112,173) 32.3%,rgb(50,114,176) 34.3%,rgb(51,117,178) 36.4%,rgb(52,119,180) 38.4%,rgb(52,122,182) 40.4%,rgb(53,124,183) 42.4%,rgb(53,126,184) 44.4%,rgb(53,128,185) 46.5%,rgb(53,130,186) 48.5%,rgb(53,131,186) 50.5%,rgb(53,132,186) 52.5%,rgb(53,133,185) 54.5%,rgb(53,133,184) 56.6%,rgb(53,134,183) 58.6%,rgb(52,133,181) 60.6%,rgb(52,133,179) 62.6%,rgb(51,132,177) 64.6%,rgb(50,132,174) 66.7%,rgb(50,130,171) 68.7%,rgb(49,129,169) 70.7%,rgb(48,128,166) 72.7%,rgb(47,127,163) 74.7%,rgb(46,125,160) 76.8%,rgb(46,124,157) 78.8%,rgb(45,123,154) 80.8%,rgb(44,121,151) 82.8%,rgb(44,120,149) 84.8%,rgb(43,120,146) 86.9%,rgb(42,119,143) 88.9%,rgb(42,118,141) 90.9%,rgb(41,117,139) 92.9%,rgb(41,117,137) 94.9%,rgb(41,117,135) 97.0%,rgb(40,117,133) 99.0%,rgb(40,117,132) 100.0%)"></div>
<div class="col N" style="left:1003px;width:50px;background-image:linear-gradient(to bottom,rgb(40,85,136) 0.0%,rgb(40,85,138) 2.0%,rgb(40,86,139) 4.0%,rgb(41,86,140) 6.1%,rgb(41,87,142) 8.1%,rgb(42,88,144) 10.1%,rgb(42,89,146) 12.1%,rgb(42,90,148) 14.1%,rgb(43,92,150) 16.2%,rgb(44,93,152) 18.2%,rgb(44,95,154) 20.2%,rgb(45,97,157) 22.2%,rgb(45,99,159) 24.2%,rgb(46,101,162) 26.3%,rgb(47,103,164) 28.3%,rgb(47,105,166) 30.3%,rgb(48,108,168) 32.3%,rgb(48,110,170) 34.3%,rgb(49,112,172) 36.4%,rgb(50,115,174) 38.4%,rgb(50,117,175) 40.4%,rgb(50,119,177) 42.4%,rgb(51,121,178) 44.4%,rgb(51,122,178) 46.5%,rgb(51,124,179) 48.5%,rgb(51,125,179) 50.5%,rgb(51,126,179) 52.5%,rgb(51,127,178) 54.5%,rgb(51,127,177) 56.6%,rgb(50,127,176) 58.6%,rgb(50,127,174) 60.6%,rgb(50,127,172) 62.6%,rgb(49,127,170) 64.6%,rgb(48,126,168) 66.7%,rgb(48,125,166) 68.7%,rgb(47,124,164) 70.7%,rgb(47,123,161) 72.7%,rgb(46,122,158) 74.7%,rgb(45,121,156) 76.8%,rgb(44,120,153) 78.8%,rgb(44,119,151) 80.8%,rgb(43,119,148) 82.8%,rgb(43,118,146) 84.8%,rgb(42,117,143) 86.9%,rgb(42,117,141) 88.9%,rgb(41,116,139) 90.9%,rgb(41,116,137) 92.9%,rgb(41,116,135) 94.9%,rgb(40,116,134) 97.0%,rgb(40,116,132) 99.0%,rgb(40,116,131) 100.0%)"></div>
<div class="col E" style="left:1053px;width:51px;background-image:linear-gradient(to bottom,rgb(40,84,135) 0.0%,rgb(40,85,137) 2.0%,rgb(40,85,138) 4.0%,rgb(40,86,139) 6.1%,rgb(41,87,141) 8.1%,rgb(41,87,142) 10.1%,rgb(41,88,144) 12.1%,rgb(42,89,146) 14.1%,rgb(42,91,147) 16.2%,rgb(43,92,149) 18.2%,rgb(43,93,151) 20.2%,rgb(44,95,153) 22.2%,rgb(44,96,155) 24.2%,rgb(45,98,157) 26.3%,rgb(45,100,159) 28.3%,rgb(46,102,161) 30.3%,rgb(46,104,163) 32.3%,rgb(47,106,165) 34.3%,rgb(47,108,166) 36.4%,rgb(48,110,168) 38.4%,rgb(48,112,169) 40.4%,rgb(48,114,170) 42.4%,rgb(49,115,171) 44.4%,rgb(49,117,172) 46.5%,rgb(49,118,172) 48.5%,rgb(49,119,172) 50.5%,rgb(49,120,172) 52.5%,rgb(49,121,171) 54.5%,rgb(49,121,170) 56.6%,rgb(48,122,169) 58.6%,rgb(48,122,168) 60.6%,rgb(48,122,166) 62.6%,rgb(47,121,165) 64.6%,rgb(47,121,163) 66.7%,rgb(46,121,161) 68.7%,rgb(46,120,158) 70.7%,rgb(45,119,156) 72.7%,rgb(44,118,154) 74.7%,rgb(44,117,152) 76.8%,rgb(43,117,149) 78.8%,rgb(43,116,147) 80.8%,rgb(42,116,145) 82.8%,rgb(42,115,143) 84.8%,rgb(41,115,141) 86.9%,rgb(41,115,139) 88.9%,rgb(41,114,137) 90.9%,rgb(40,114,135) 92.9%,rgb(40,114,134) 94.9%,rgb(40,114,132) 97.0%,rgb(40,115,131) 99.0%,rgb(40,115,130) 100.0%)"></div>
<div class="col N" style="left:1104px;width:50px;background-image:linear-gradient(to bottom,rgb(40,84,135) 0.0%,rgb(40,85,136) 2.0%,rgb(40,85,137) 4.0%,rgb(40,85,138) 6.1%,rgb(40,86,139) 8.1%,rgb(41,87,140) 10.1%,rgb(41,87,142) 12.1%,rgb(41,88,143) 14.1%,rgb(42,89,145) 16.2%,rgb(42,90,147) 18.2%,rgb(42,92,148) 20.2%,rgb(43,93,150) 22.2%,rgb(43,94,152) 24.2%,rgb(44,96,154) 26.3%,rgb(44,97,155) 28.3%,rgb(44,99,157) 30.3%,rgb(45,101,158) 32.3%,rgb(45,102,160) 34.3%,rgb(46,104,161) 36.4%,rgb(46,106,162) 38.4%,rgb(46,107,163) 40.4%,rgb(46,109,164) 42.4%,rgb(47,110,165) 44.4%,rgb(47,112,165) 46.5%,rgb(47,113,166) 48.5%,rgb(47,113,166) 50.5%,rgb(47,114,165) 52.5%,rgb(47,115,165) 54.5%,rgb(47,116,164) 56.6%,rgb(46,116,163) 58.6%,rgb(46,116,162) 60.6%,rgb(46,116,161) 62.6%,rgb(45,116,159) 64.6%,rgb(45,116,157) 66.7%,rgb(45,116,156) 68.7%,rgb(44,115,154) 70.7%,rgb(44,115,152) 72.7%,rgb(43,114,150) 74.7%,rgb(43,114,148) 76.8%,rgb(42,113,146) 78.8%,rgb(42,113,144) 80.8%,rgb(41,113,142) 82.8%,rgb(41,113,140) 84.8%,rgb(41,113,139) 86.9%,rgb(40,113,137) 88.9%,rgb(40,113,135) 90.9%,rgb(40,113,134) 92.9%,rgb(40,113,132) 94.9%,rgb(40,113,131) 97.0%,rgb(39,114,130) 99.0%,rgb(39,114,129) 100.0%)"></div>

<div class="lbl" style="left:15.60px;top:742px">E3</div>
<div class="lbl" style="left:65.78px;top:792px">F#3</div>
<div class="lbl" style="left:115.96px;top:805px">G#3</div>
<div class="lbl" style="left:166.15px;top:805px">A3</div>
<div class="lbl" style="left:216.33px;top:805px">B3</div>
<div class="lbl" style="left:266.51px;top:805px">C#4</div>
<div class="lbl" style="left:316.69px;top:805px">D4</div>
<div class="lbl" style="left:366.87px;top:805px">E4</div>
<div class="lbl" style="left:417.05px;top:805px">F#4</div>
<div class="lbl" style="left:467.24px;top:805px">G#4</div>
<div class="lbl" style="left:517.42px;top:805px">A4</div>
<div class="lbl" style="left:567.60px;top:805px">B4</div>
<div class="lbl" style="left:617.78px;top:805px">C#5</div>
<div class="lbl" style="left:667.96px;top:805px">D5</div>
<div class="lbl" style="left:718.15px;top:805px">E5</div>
<div class="lbl" style="left:768.33px;top:805px">F#5</div>
<div class="lbl" style="left:818.51px;top:805px">G#5</div>
<div class="lbl" style="left:868.69px;top:805px">A5</div>
<div class="lbl" style="left:918.87px;top:805px">B5</div>
<div class="lbl" style="left:969.05px;top:805px">C#6</div>
<div class="lbl" style="left:1019.24px;top:805px">D6</div>

<svg id="toolbar" width="1104" height="36" viewBox="0 0 1104 36" style="position:absolute;left:0;top:0">
 <defs>
  <linearGradient id="tabg" x1="0" y1="0" x2="0" y2="1"><stop offset="0" stop-color="#3a3a3a"/><stop offset=".12" stop-color="#262626"/><stop offset=".55" stop-color="#070707"/><stop offset="1" stop-color="#000"/></linearGradient>
  <linearGradient id="btng" x1="0" y1="0" x2="0" y2="1"><stop offset="0" stop-color="#161616"/><stop offset=".4" stop-color="#000"/><stop offset="1" stop-color="#000"/></linearGradient>
  <radialGradient id="redlo" cx=".78" cy=".9" r=".75"><stop offset="0" stop-color="#f02412"/><stop offset=".45" stop-color="#a80a08"/><stop offset="1" stop-color="#7c0606"/></radialGradient>
  <linearGradient id="redhi" x1="0" y1="0" x2="0" y2="1"><stop offset="0" stop-color="#c45a5a"/><stop offset="1" stop-color="#b04040"/></linearGradient>
  <radialGradient id="blk" cx=".5" cy=".5" r=".5"><stop offset="0" stop-color="#0c0c0c"/><stop offset=".85" stop-color="#151515"/><stop offset="1" stop-color="#2a2a2a"/></radialGradient>
  <linearGradient id="blk2" x1="0" y1="0" x2="0" y2="1"><stop offset="0" stop-color="#000"/><stop offset=".5" stop-color="#1c1c1c"/><stop offset=".52" stop-color="#101010"/><stop offset="1" stop-color="#262626"/></linearGradient>
  <linearGradient id="oran" x1="0" y1="0" x2="0" y2="1"><stop offset="0" stop-color="#ffd0a8"/><stop offset="1" stop-color="#e8884a"/></linearGradient>
  <linearGradient id="bnote" x1="0" y1="0" x2="0" y2="1"><stop offset="0" stop-color="#c8e4f8"/><stop offset="1" stop-color="#4aa8f0"/></linearGradient>
  <filter id="bl"><feGaussianBlur stdDeviation=".6"/></filter><filter id="bl2" x="-20%" y="-20%" width="140%" height="140%"><feGaussianBlur stdDeviation=".75"/></filter>
 </defs>
 <rect x="0" y="0" width="1104" height="36" fill="#0a1520"/>
 <rect x="0" y="0" width="1104" height="1.2" fill="#141414"/>
 <!-- Sound tab -->
 <path d="M0 1.3 H53 C50 1.3 49 4 48 6.5 L43 21 C41.5 26 40 30.4 34 30.4 H0 Z" fill="url(#tabg)"/>
 <text x="4" y="17.2" font-family="Liberation Sans" font-weight="700" font-size="11.6" fill="#eaeaea">Sound</text>
 <!-- Loop tab -->
 <path d="M1104 1.3 H1051.5 C1053.5 1.3 1054.5 4 1055.3 6.5 L1061 21 C1062.5 26 1065 30.4 1071 30.4 H1104 Z" fill="url(#tabg)"/>
 <text x="1068.8" y="17.2" font-family="Liberation Sans" font-weight="700" font-size="11.3" fill="#eaeaea">Loop</text>
 <!-- square buttons -->
 <g stroke="#262626" stroke-width="1" fill="url(#btng)">
  <rect x="69.5" y="2.2" width="31.5" height="31.2" rx="5.5"/>
  <rect x="112.4" y="2.2" width="31.5" height="31.2" rx="5.5"/>
  <rect x="154.3" y="2.2" width="31.2" height="31.2" rx="5.5"/>
  <rect x="196.4" y="2.2" width="31.5" height="31.2" rx="5.5"/>
  <rect x="237.8" y="2.2" width="31" height="31.2" rx="5.5"/>
  <rect x="285.8" y="2.2" width="31.9" height="31.1" rx="5.5"/>
  <rect x="323.1" y="2.2" width="31.5" height="31.1" rx="5.5"/>
  <rect x="370.8" y="2.2" width="31.5" height="31.1" rx="5.5"/>
  <rect x="407.8" y="2.2" width="31.5" height="31.1" rx="5.5"/>
  <rect x="650.4" y="2.2" width="31.2" height="31.1" rx="5.5"/>
  <rect x="689" y="2.2" width="31.2" height="31.1" rx="5.5"/>
  <rect x="727.8" y="2.2" width="30.8" height="31.1" rx="5.5"/>
 </g>
 <!-- sharp/flat -->
 <g stroke="#e8e8e8" fill="none" stroke-linecap="round">
  <path d="M76 12.2 L74.9 25.5" stroke-width="1.1"/><path d="M79.4 11.8 L78.3 25.2" stroke-width="1.1"/>
  <path d="M73.2 15.9 L80.8 14.1" stroke-width="1.6"/><path d="M73 21.6 L80.6 19.8" stroke-width="1.6"/>
  <path d="M87.1 10.2 L86.8 25.5" stroke-width="1.1"/><path d="M86.9 19.8 C89 17.3 93 17 92.8 19.8 C92.6 22.2 89.5 24 86.8 25.5" stroke-width="1.1"/>
 </g>
 <!-- pedal -->
 <g filter="url(#bl2)">
  <rect x="115.8" y="8.3" width="23.2" height="7.6" fill="#8c8c8c"/>
  <rect x="116" y="9.6" width="22.8" height="1.3" fill="#c4c4c4"/>
  <rect x="116" y="12.4" width="22.8" height="1.1" fill="#b4b4b4"/>
  <rect x="116" y="14.6" width="22.8" height="1" fill="#a8a8a8"/>
  <path d="M121.5 15.8 L125.5 15.8 L121 25 L115.5 25 Z" fill="#b0b0b0"/>
  <path d="M129 15.8 L133 15.8 L139.2 25 L133.5 25 Z" fill="#b0b0b0"/>
  <path d="M125.5 15.8 L129 15.8 L128 20 L126.5 20 Z" fill="#707070"/>
 </g>
 <!-- glide -->
 <path d="M160.5 24.6 H169.3 V11 H178.4" stroke="#3c9fe6" stroke-width="2.6" fill="none" stroke-linecap="round" stroke-linejoin="round"/>
 <!-- split -->
 <path d="M202.9 27 V10.8 Q202.9 9.3 204.4 9.3 H219.7 Q221.2 9.3 221.2 10.8 V27 M212 9.3 V27" stroke="#dcdcdc" stroke-width="1.5" fill="none"/>
 <!-- ARP -->
 <text x="241.4" y="21.8" font-family="Liberation Sans" font-size="10.9" fill="#dfe8ee">ARP</text>
 <!-- span -->
 <rect x="297" y="16.6" width="7" height="3.3" fill="#f4f4f4"/>
 <path d="M331.8 17 H344.1 V20.3 H339.8 V24.6 H336.2 V20.3 H331.8 Z M336.2 17 V12.7 H339.8 V17 Z" fill="#f4f4f4"/>
 <text x="306.6" y="15.2" font-family="Liberation Sans" font-size="11" fill="#b9c1c8">Span</text>
 <!-- oct -->
 <rect x="380.6" y="15.6" width="8.3" height="4" fill="#f4f4f4"/>
 <path d="M414.3 16.3 H430.2 V19.9 H424.4 V26.1 H420 V19.9 H414.3 Z M420 16.3 V10.1 H424.4 V16.3 Z" fill="#f4f4f4"/>
 <text x="394.2" y="15.6" font-family="Liberation Sans" font-size="11" fill="#b9c1c8">Oct</text>
 <!-- record -->
 <circle cx="467.6" cy="17.4" r="13.4" fill="url(#redlo)"/>
 <path d="M454.5 20.5 A13.4 13.4 0 0 1 480.9 14.5 C476 13.2 470 13 464 15.5 C459.5 17.5 456.5 20.5 455.5 22.5 Z" fill="#b85050" opacity=".95"/>
 <circle cx="467.6" cy="17.4" r="13.2" fill="none" stroke="#c86a6a" stroke-width=".5" opacity=".6"/>
 <!-- mic red -->
 <circle cx="507.3" cy="18" r="11.8" fill="url(#redlo)"/>
 <path d="M495.6 19.5 A11.8 11.8 0 0 1 519 16.5 C514 15.5 508 15.5 503 17.5 C499 19 497 21 496.2 22.5 Z" fill="#b85050" opacity=".95"/>
 <rect x="504.9" y="9.8" width="5.2" height="11.8" rx="2.6" fill="#ecd8d8"/>
 <path d="M503.4 18 V19.5 C503.4 23.5 511.6 23.5 511.6 19.5 V18" stroke="#ecd8d8" stroke-width=".9" fill="none"/>
 <path d="M507.5 23.2 V25.2 M505 25.5 H510" stroke="#ecd8d8" stroke-width="1" fill="none"/>
 <!-- timer red -->
 <circle cx="546" cy="18.1" r="11.8" fill="url(#redlo)"/>
 <path d="M534.3 19.5 A11.8 11.8 0 0 1 557.7 16.5 C552.7 15.5 546.7 15.5 541.7 17.5 C537.7 19 535.7 21 534.9 22.5 Z" fill="#b85050" opacity=".95"/>
 <circle cx="545.6" cy="18.4" r="5.7" stroke="#ead4d4" stroke-width="2.2" fill="none"/>
 <path d="M545.6 10.5 V18.6" stroke="#ead4d4" stroke-width="1.8"/>
 <rect x="544.2" y="9.3" width="2.8" height="2.4" rx=".6" fill="#ead4d4"/>
 <path d="M549.8 14.2 L552 12.2" stroke="#ead4d4" stroke-width="2.3" stroke-linecap="round"/>
 <!-- rewind -->
 <circle cx="585.2" cy="18.7" r="14.2" fill="url(#blk2)" stroke="#1e2830" stroke-width=".8"/>
 <rect x="578.6" y="12.3" width="2.3" height="13.1" fill="#d4d4d4"/>
 <path d="M580.9 18.8 L592.1 12.3 V25.4 Z" fill="#d4d4d4"/>
 <!-- play -->
 <circle cx="622.1" cy="18.7" r="14.3" fill="url(#blk2)" stroke="#1e2830" stroke-width=".8"/>
 <path d="M616.4 10.9 L630.4 18.8 L616.4 27.2 Z" fill="#d4d4d4"/>
 <!-- metronome -->
 <g stroke="#d0d0d0" stroke-width="1.1" fill="none" stroke-linejoin="round">
  <path d="M662.5 5.8 H665.9 L672.3 27.6 H657.4 Z"/>
  <path d="M664.4 25.8 L671.8 8.4"/>
  <path d="M669.5 12.5 L671 13.8"/>
  <path d="M658.2 28.2 V29.2 M671.5 28.2 V29.2" stroke-width="1.5"/>
 </g>
 <!-- mic waves -->
 <g>
  <rect x="694.9" y="9.4" width="5.4" height="11.8" rx="2.7" fill="#cfcfcf"/>
  <path d="M693.3 17.3 V18.5 C693.3 23.2 701.9 23.2 701.9 18.5 V17.3" stroke="#cfcfcf" stroke-width="1" fill="none"/>
  <path d="M697.6 22.5 V25.3 M695 25.6 H700.4" stroke="#cfcfcf" stroke-width="1" fill="none"/>
  <g stroke="#cfcfcf" stroke-width="1" fill="none">
   <path d="M705.5 13.5 C707 15.5 707 18 705.5 20"/>
   <path d="M707.8 11.5 C710 14.5 710 19 707.8 22"/>
   <path d="M710 9.6 C713 13.5 713 20 710 23.6"/>
  </g>
 </g>
 <!-- mic note -->
 <g>
  <rect x="733.5" y="9.4" width="5.4" height="11.8" rx="2.7" fill="url(#oran)"/>
  <path d="M731.9 17.3 V18.5 C731.9 23.2 740.5 23.2 740.5 18.5 V17.3" stroke="#e49050" stroke-width="1" fill="none"/>
  <path d="M736.2 22.5 V25.3 M733.6 25.6 H738.8" stroke="#e49050" stroke-width="1" fill="none"/>
  <path d="M745.5 22 V10 L753.6 7 V19.5" stroke="url(#bnote)" stroke-width="1.3" fill="none"/>
  <ellipse cx="744" cy="22.3" rx="2.6" ry="1.9" transform="rotate(-25 744 22.3)" fill="#4aaaf2"/>
  <ellipse cx="752" cy="19.8" rx="2.6" ry="1.9" transform="rotate(-25 752 19.8)" fill="#4aaaf2"/>
 </g>
</svg>
<svg width="1104" height="828" style="position:absolute;left:0;top:0;pointer-events:none">
 <defs>
  <linearGradient id="tabg2" x1="0" y1="0" x2="0" y2="1"><stop offset="0" stop-color="#505050"/><stop offset=".08" stop-color="#2a2a2a"/><stop offset=".6" stop-color="#050505"/><stop offset="1" stop-color="#000"/></linearGradient>
 </defs>
 <path d="M0 828 V797 H34 C38 797 40 800 41 803 L48 821 C49.5 825 52 828 57 828 Z" fill="url(#tabg2)"/>
 <text x="10.7" y="816.3" font-family="Liberation Sans" font-weight="700" font-size="11.6" fill="#eeeeee">Edit</text>
 <path d="M1104 828 V797 H1073 C1069 797 1067 800 1066 803 L1057 821 C1055.5 825 1053 828 1048 828 Z" fill="url(#tabg2)"/>
 <text x="1069.2" y="816.3" font-family="Liberation Sans" font-weight="700" font-size="11.6" fill="#eeeeee">Prefs</text>
</svg>
<svg id="arrow" viewBox="0 0 14 22"><path d="M12 0 L1.5 9 Q0 10.5 1.5 12 L12 22 Z" fill="#c8cbd0"/></svg>
<div id="panel">
 <div id="list"><div class="sec" style="top:71.00px;height:17.9px;line-height:18.4px">Jazz</div><div class="row" style="top:88.90px"><span>Chromatic Bebop</span></div><div class="row" style="top:117.96px"><span>Dominant Bebop</span></div><div class="row" style="top:147.02px"><span>Half-Dimiished Bebop</span></div><div class="row" style="top:176.08px"><span>Jazz Minor Inverse</span></div><div class="row" style="top:205.14px"><span>Major Bebop</span></div><div class="row" style="top:234.20px"><span>Major Bebop Heptatonic</span></div><div class="row" style="top:263.26px"><span>Major Bebop Hexatonic</span></div><div class="row" style="top:292.32px"><span>Minor Bebop</span></div><div class="row" style="top:321.38px"><span>Minor Bebop 2</span></div><div class="sec" style="top:350.44px">Modal</div><div class="row" style="top:369.44px"><span>Dorian</span></div><div class="row" style="top:398.50px"><span>Phrygian</span></div><div class="row" style="top:427.56px"><span>Lydian</span></div><div class="row sel" style="top:456.62px"><span>Mixolydian</span><i class="chk"></i></div><div class="row" style="top:485.68px"><span>Major Locrian</span></div><div class="row" style="top:514.74px"><span>Minor Locrian</span></div><div class="row" style="top:543.80px"><span>Mixolydian Augmented</span></div><div class="row" style="top:572.86px"><span>Mixolydian b5</span></div><div class="row" style="top:601.92px"><span>Mixolydian Hexatonic</span></div><div class="row" style="top:630.98px"><span>Mixolydian Pentatonic</span></div></div>
 <div id="idxs">
  <div style="position:absolute;left:0;top:71px;width:43px;height:17.9px;background:#54585b"></div>
  <div style="position:absolute;left:0;top:350.7px;width:43px;height:19px;background:#54585b"></div>
  <div class="idx" style="top:255.8px">Common</div><div class="idx" style="top:275.6px">Asia</div><div class="idx" style="top:295.4px">Blues</div><div class="idx" style="top:315.2px">Chords</div><div class="idx" style="top:335.0px">Europe</div><div class="idx" style="top:354.8px">India</div><div class="idx" style="top:374.6px">Intervals</div><div class="idx" style="top:394.4px">Jazz</div><div class="idx" style="top:414.2px">Modal</div><div class="idx" style="top:434.0px">Other</div><div class="idx" style="top:453.8px">User</div></div>
 <div id="phead">
  <div class="txt" style="left:7.2px;top:10.7px;font-size:13.7px;color:#5ac8fa">Done</div>
  <div class="txt" style="left:108.5px;top:10.7px;font-size:13.3px;font-weight:700;color:#f2f2f2">Scales</div>
  <div class="txt" style="left:229px;top:10.7px;font-size:13.3px;color:#5ac8fa">Edit</div>
 </div>
 <div id="pseg"><div id="seg"><div class="on">All</div><div class="off">Favorites</div></div></div>
 <div id="pfoot">
  <div class="txt" style="left:7px;top:12px;font-size:13.6px;color:#5ac8fa">Add as Favorite</div>
  <div class="txt" style="left:174.5px;top:12px;font-size:13.9px;color:#7a7a7a">Modify</div>
  <div class="txt" style="left:225.5px;top:12px;font-size:13.3px;color:#5ac8fa">New</div>
 </div>
</div>
<div class="txt" style="left:519.8px;top:137.2px;font-size:16px;font-weight:700;color:#e2e6ea;text-shadow:0 1px 1px rgba(0,0,0,.55)">Trumpet</div>
<div class="txt" style="left:521.5px;top:781px;font-size:13px;color:#dde2e6;text-shadow:0 1px 1px rgba(0,0,0,.55)">Mixolydian</div>
<div id="pans" style="position:absolute;left:400px;top:499.3px;width:300px;font-size:12px;line-height:13.3px;color:rgba(215,228,240,.64);-webkit-text-stroke:.3px rgba(215,228,240,.5)">
 <div style="position:absolute;right:150px;top:0;text-align:right;white-space:nowrap">Pan:<br>Vibrato:<br>Tremolo:<br>Pitch Bend:</div>
 <div style="position:absolute;left:154px;top:0;white-space:nowrap">X Axis<br>Finger<br>Finger<br>V. Tilt</div>
</div>
<div id="mic" style="position:absolute;left:801px;top:154px;width:262px;height:57px;border-radius:4px;background:rgba(12,18,30,.5)">
 <div class="txt" style="left:6px;top:5px;font-size:10.4px;font-weight:700;color:#dfe4ea">Sing or play into the mic</div>
 <div class="txt" style="left:140px;top:5px;font-size:9px;color:#c9d2da">Headphones recommended</div>
 <div style="position:absolute;left:8px;top:22px;width:28.5px;height:27px;border-radius:4px;background:#000;border:1px solid #222"></div>
 <svg style="position:absolute;left:8px;top:22px" width="29" height="27" viewBox="0 0 29 27">
  <path d="M2.6 21.6 L4.6 21.2 L5 17.2 L11.2 16.4 L12 8.4 L14 8 L14.4 3.3 L17.6 2.8" stroke="#3c9fe6" stroke-width="1.4" fill="none" stroke-linejoin="round" stroke-linecap="round"/>
  <path d="M19.1 18.6 V6.4 L25.7 4.4 V16.8" stroke="#f0f0f0" stroke-width="1.2" fill="none"/>
  <path d="M19.1 6.4 L25.7 4.4" stroke="#f0f0f0" stroke-width="1.8" fill="none"/>
  <ellipse cx="16.6" cy="18.9" rx="2.6" ry="2" transform="rotate(-20 16.6 18.9)" fill="#f4f4f4"/>
  <ellipse cx="23.2" cy="17.1" rx="2.6" ry="2" transform="rotate(-20 23.2 17.1)" fill="#f4f4f4"/>
 </svg>
 <div style="position:absolute;left:43.5px;top:22px;width:29px;height:27px;border-radius:4px;background:#000;border:1px solid #222"></div>
 <div style="position:absolute;left:53.8px;top:33px;width:8.6px;height:4px;background:#f2f2f2"></div>
 <div class="txt" style="left:77.5px;top:20.5px;font-size:11px;color:#c4ccd4">Oct</div>
 <div class="txt" style="left:79px;top:34.5px;font-size:13px;font-weight:700;color:#fff">+0</div>
 <div style="position:absolute;left:101.5px;top:22px;width:28.6px;height:27px;border-radius:4px;background:#000;border:1px solid #222"></div>
 <div style="position:absolute;left:109.8px;top:34px;width:12px;height:3.2px;background:#f2f2f2"></div>
 <div style="position:absolute;left:114.2px;top:29.6px;width:3.2px;height:12px;background:#f2f2f2"></div>
 <div class="box" style="left:139px">-30<b>Thr</b></div>
 <div class="box" style="left:179.2px">50<b>Vel</b></div>
 <div class="box" style="left:219.3px">30<b>Gli</b></div>
</div>
<svg style="position:absolute;left:243px;top:491px" width="13" height="11" viewBox="0 0 13 11"><path d="M1.5 5.5 L4.8 9 L11.5 1.5" stroke="#4a9cf2" stroke-width="1.6" fill="none" stroke-linecap="round" stroke-linejoin="round"/></svg>


</div></body></html>
